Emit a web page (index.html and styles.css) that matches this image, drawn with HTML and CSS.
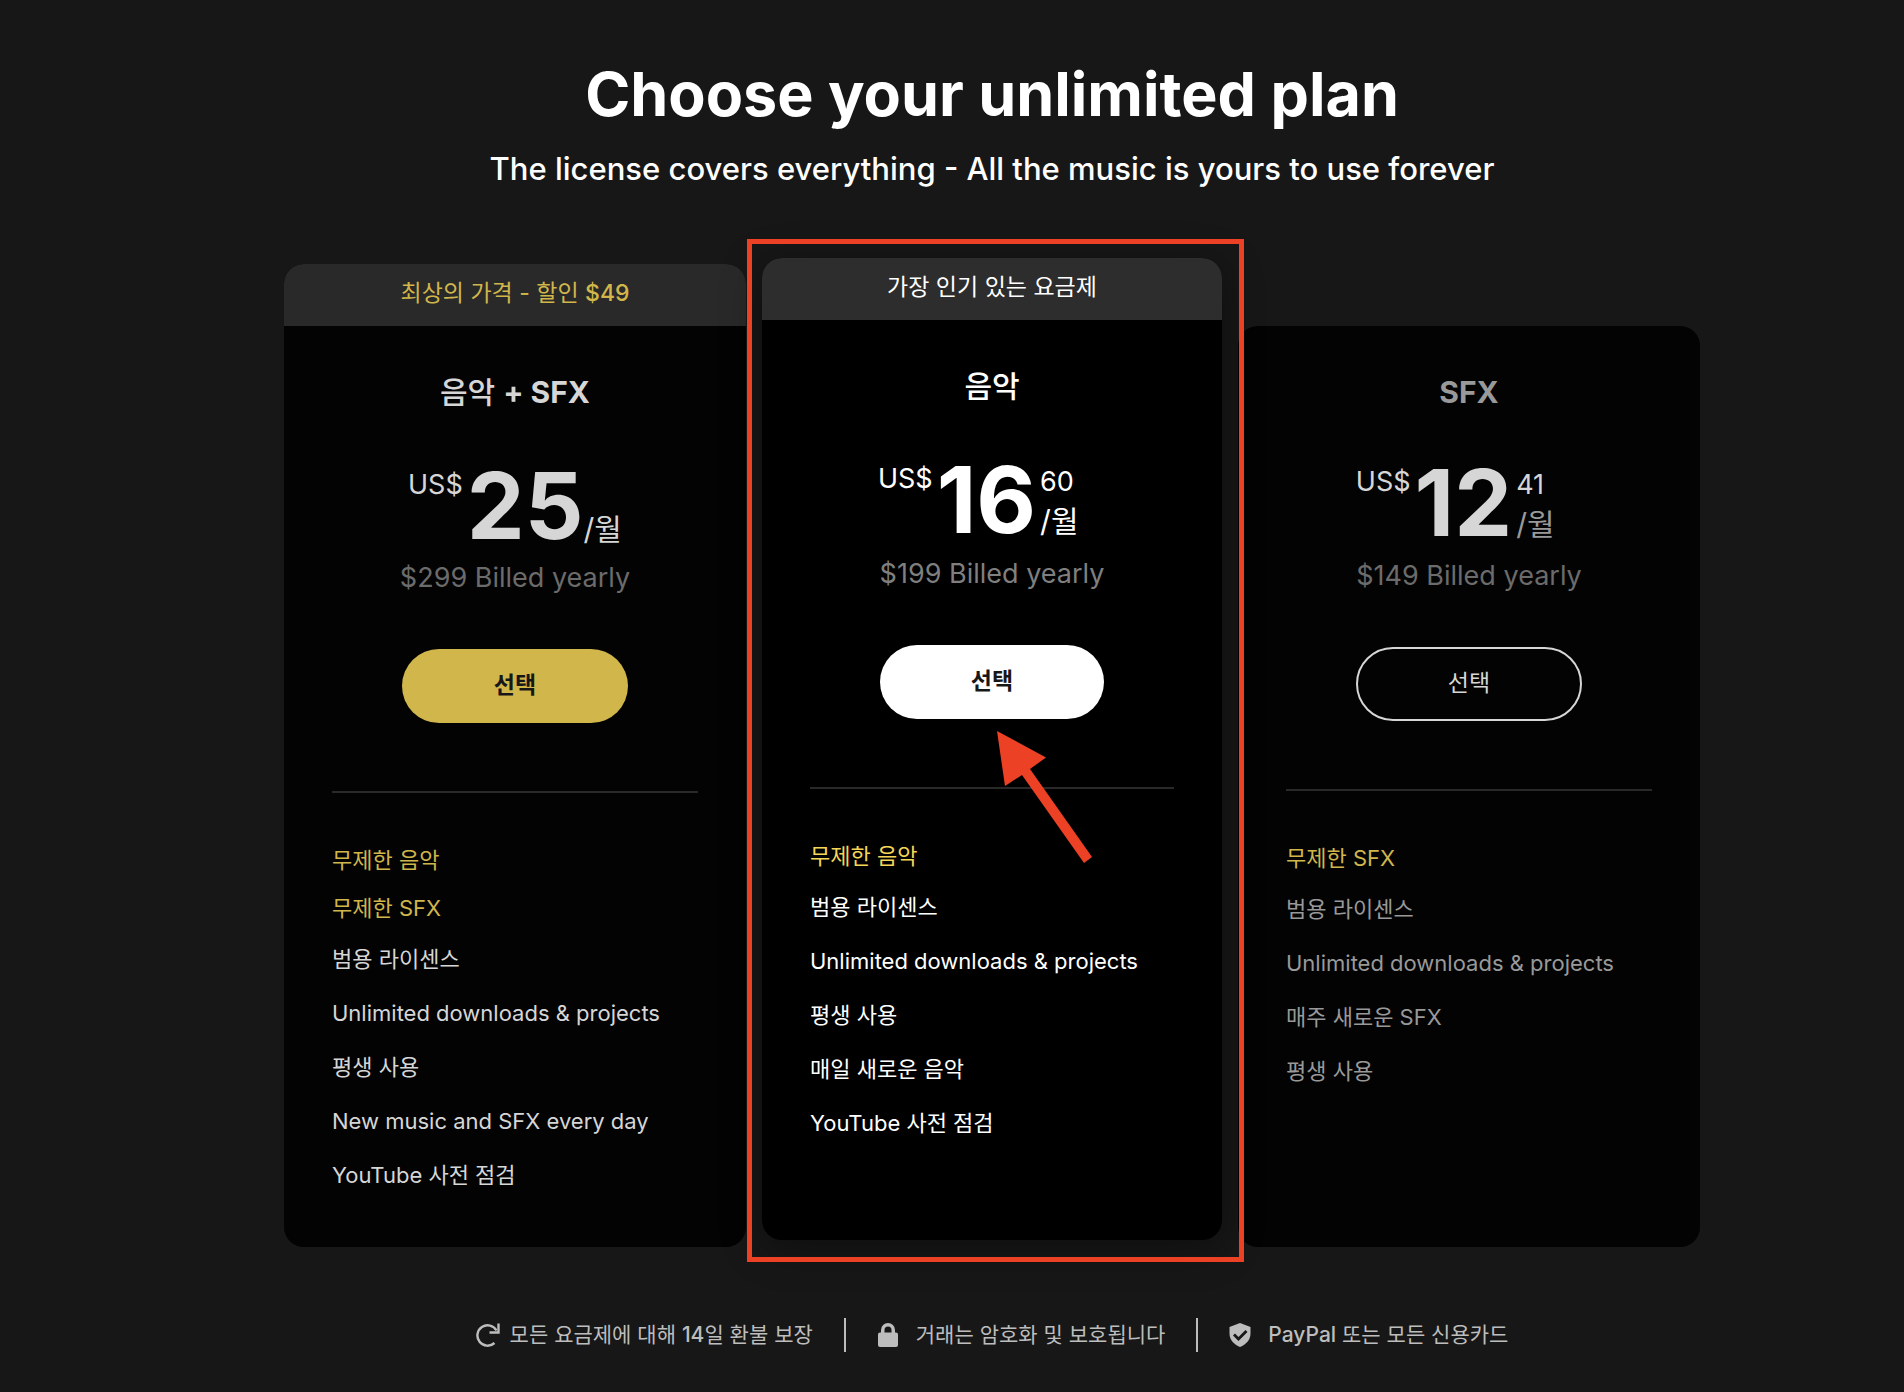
FILE: index.html
```html
<!DOCTYPE html>
<html lang="ko">
<head>
  <meta charset="UTF-8" />
  <meta name="viewport" content="width=device-width, initial-scale=1.0" />
  <title>Choose your unlimited plan</title>
  <link rel="stylesheet" href="styles.css">
</head>
<body>
<main class="pricing">
  <h1 class="title">Choose your unlimited plan</h1>
  <p class="subtitle">The license covers everything - All the music is yours to use forever</p>

  <div class="plans">
    <!-- Music + SFX -->
    <section class="plan">
      <p class="ribbon gold">최상의 가격 - 할인 <b>$49</b></p>
      <div class="plan-body">
        <h2>음악 <b>+ SFX</b></h2>
        <div class="price">
          <span class="currency">US$</span>
          <span class="amount">25</span>
          <span class="period">/월</span>
        </div>
        <p class="billed">$299 Billed yearly</p>
        <button class="select select-gold" type="button">선택</button>
        <ul class="features">
          <li class="gold">무제한 음악</li>
          <li class="gold">무제한 SFX</li>
          <li>범용 라이센스</li>
          <li>Unlimited downloads &amp; projects</li>
          <li>평생 사용</li>
          <li>New music and SFX every day</li>
          <li>YouTube 사전 점검</li>
        </ul>
      </div>
    </section>

    <!-- Music, most popular -->
    <section class="plan featured">
      <p class="ribbon">가장 인기 있는 요금제</p>
      <div class="plan-body">
        <h2>음악</h2>
        <div class="price">
          <span class="currency">US$</span>
          <span class="amount">16</span>
          <span class="fraction"><span class="cents">60</span><span class="period">/월</span></span>
        </div>
        <p class="billed">$199 Billed yearly</p>
        <button class="select select-white" type="button">선택</button>
        <ul class="features">
          <li class="gold">무제한 음악</li>
          <li>범용 라이센스</li>
          <li>Unlimited downloads &amp; projects</li>
          <li>평생 사용</li>
          <li>매일 새로운 음악</li>
          <li>YouTube 사전 점검</li>
        </ul>
      </div>
      <div class="highlight"></div>
      <svg class="arrow" width="96" height="134" viewBox="0 0 96 134" aria-hidden="true">
        <path d="M0 0L49 26.500L33 38L95 126L87 132L25 44L8 55Z" fill="#ed4126"/>
      </svg>
    </section>

    <!-- SFX -->
    <section class="plan plain">
      <div class="plan-body">
        <h2><b>SFX</b></h2>
        <div class="price">
          <span class="currency">US$</span>
          <span class="amount">12</span>
          <span class="fraction"><span class="cents">41</span><span class="period">/월</span></span>
        </div>
        <p class="billed">$149 Billed yearly</p>
        <button class="select select-outline" type="button">선택</button>
        <ul class="features">
          <li class="gold">무제한 SFX</li>
          <li>범용 라이센스</li>
          <li>Unlimited downloads &amp; projects</li>
          <li>매주 새로운 SFX</li>
          <li>평생 사용</li>
        </ul>
      </div>
    </section>
  </div>

  <ul class="assurances">
    <li>
      <svg width="24" height="24" viewBox="0 0 24 24" fill="none" stroke="currentColor" stroke-width="2.400" aria-hidden="true">
        <path d="M18.500 20A10.200 10.200 0 1 1 20.500 7.500"/>
        <path d="M22.500 0.500V9.500H13.500"/>
      </svg>
      <span>모든 요금제에 대해 <b>14</b>일 환불 보장</span>
    </li>
    <li>
      <svg width="24" height="24" viewBox="0 0 24 24" fill="currentColor" aria-hidden="true">
        <path d="M5 9.500V7a7 7 0 0 1 14 0v2.500h1a2 2 0 0 1 2 2V22a2 2 0 0 1-2 2H4a2 2 0 0 1-2-2V11.500a2 2 0 0 1 2-2zM8.500 9.500h7V7a3.500 3.500 0 0 0-7 0z"/>
      </svg>
      <span>거래는 암호화 및 보호됩니다</span>
    </li>
    <li>
      <svg width="24" height="24" viewBox="0 0 24 24" aria-hidden="true">
        <path d="M12 0L22.500 4V10.500C22.500 17 18 21.500 12 24C6 21.500 1.500 17 1.500 10.500V4Z" fill="currentColor"/>
        <path d="M6 11.500L10.500 16L18.500 8" fill="none" stroke="#171717" stroke-width="2.800"/>
      </svg>
      <span><b>PayPal</b> 또는 모든 신용카드</span>
    </li>
  </ul>
</main>
</body>
</html>
```
FILE: styles.css
```css
* {
  box-sizing: border-box;
}
body {
  margin: 0;
  background-color: #171717;
  color: #fff;
  font-family: Inter, 'Noto Sans CJK KR', sans-serif;
}
h1, h2, p, ul {
  margin: 0;
  padding: 0;
}
ul {
  list-style: none;
}
.pricing {
  padding: 56px 0 28px 80px;
}
.title {
  font-size: 61px;
  line-height: 76px;
  font-weight: 700;
  text-align: center;
}
.subtitle {
  margin-top: 16px;
  font-size: 31px;
  line-height: 42px;
  font-weight: 500;
  text-align: center;
}
/* Plan cards */
.plans {
  display: grid;
  grid-template-columns: repeat(3, 1fr);
  gap: 15px;
  max-width: 1416px;
  margin: 74px auto 0;
}
.plan {
  position: relative;
  border-radius: 20px;
  background-color: #030303;
  color: #d6d6d6;
}
.ribbon {
  border-radius: 20px 20px 0 0;
  background-color: #292929;
  font-size: 23px;
  line-height: 58px;
  height: 62px;
  text-align: center;
}
.ribbon b {
  font-weight: 500;
}
.gold {
  color: #d0b64b;
}
.plan-body {
  display: flex;
  flex-direction: column;
  align-items: center;
  padding: 44px 48px;
}
.plan h2 {
  font-size: 30px;
  line-height: 44px;
  font-weight: 500;
}
.plan h2 b {
  font-weight: 700;
}
.price {
  display: flex;
  align-items: flex-start;
  margin-top: 49px;
  height: 86px;
}
.currency {
  margin-top: 4px;
  font-size: 27px;
  line-height: 36px;
}
.amount {
  margin-left: 4px;
  font-size: 92px;
  line-height: 86px;
  font-weight: 700;
}
.period {
  font-size: 30px;
  line-height: 40px;
}
.price > .period {
  align-self: flex-end;
}
.fraction {
  display: flex;
  flex-direction: column;
  width: 66px;
  margin-left: 4px;
}
.cents {
  margin-top: 6px;
  font-size: 27px;
  line-height: 38px;
}
.billed {
  margin-top: 7px;
  color: #6b6b6b;
  font-size: 27px;
  line-height: 44px;
}
.select {
  width: 226px;
  height: 74px;
  margin-top: 49px;
  padding: 0 0 6px;
  border: none;
  border-radius: 37px;
  font-family: inherit;
  font-size: 23px;
  font-weight: 700;
  color: #171717;
  cursor: pointer;
}
.select-gold {
  background-color: #d0b64b;
}
.select-white {
  width: 224px;
  background-color: #fff;
}
.select-outline {
  border: 2px solid #d6d6d6;
  background-color: transparent;
  color: #d6d6d6;
  font-weight: 400;
}
.features {
  align-self: stretch;
  margin-top: 68px;
  padding: 44px 0 1px;
  border-top: 2px solid #292929;
  font-size: 22px;
  line-height: 54px;
  font-weight: 400;
}
.features .gold {
  line-height: 48px;
}
.features .gold:first-child {
  line-height: 47px;
}
/* Most popular plan, raised above its neighbours */
.featured {
  z-index: 1;
  margin: -6px 1px 7px;
  background-color: #000;
  box-shadow: 0 8px 40px rgba(0, 0, 0, 0.4);
  color: #fff;
}
.featured .ribbon {
  background-color: #2d2d2d;
}
.featured .gold {
  color: #f5d658;
}
.featured .price {
  height: 88px;
}
.featured .billed {
  color: #7f7f7f;
}
.plain {
  margin-top: 62px;
}
.plain h2, .plain .period, .plain li {
  color: #999;
}
.plain .gold {
  color: #d0b64b;
}
.plain .price {
  margin-top: 46px;
  height: 87px;
}
.highlight {
  position: absolute;
  inset: -19px -22px -22px -15px;
  border: 5px solid #ed4126;
}
.arrow {
  position: absolute;
  top: 473px;
  left: 235px;
}
/* Footer notes */
.assurances {
  display: flex;
  justify-content: center;
  margin-top: 71px;
  color: #bdbdbd;
  font-size: 21px;
  line-height: 34px;
}
.assurances b {
  font-weight: 500;
}
.assurances li {
  display: flex;
  align-items: center;
  gap: 10px;
}
.assurances li + li {
  gap: 16px;
  margin-left: 31px;
  padding-left: 30px;
  border-left: 2px solid #bdbdbd;
}
```
